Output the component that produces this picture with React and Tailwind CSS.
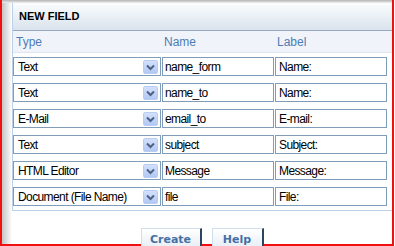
const rows = [
  { type: 'Text', name: 'name_form', label: 'Name:' },
  { type: 'Text', name: 'name_to', label: 'Name:' },
  { type: 'E-Mail', name: 'email_to', label: 'E-mail:' },
  { type: 'Text', name: 'subject', label: 'Subject:' },
  { type: 'HTML Editor', name: 'Message', label: 'Message:' },
  { type: 'Document (File Name)', name: 'file', label: 'File:' },
]

const Arrow = () => (
  <div className="absolute right-[2px] top-[2px] w-[15px] h-[14px] rounded-[2px] bg-gradient-to-b from-[#d3e0fb] to-[#b2c8f4] border border-[#b9cdf4] flex items-center justify-center">
    <svg width="9" height="7" viewBox="0 0 9 7">
      <path d="M1 1.5 L4.5 5 L8 1.5" fill="none" stroke="#4d6185" strokeWidth="2" />
    </svg>
  </div>
)

const App = () => {
  return (
    <div className="w-[395px] h-[246px] bg-white overflow-hidden">
      <div className="w-[394px] h-[246px] border-l-2 border-r-2 border-b-2 border-[#f20f0f] flex flex-col bg-white">
        <div className="h-[3px] shrink-0 bg-gradient-to-b from-[#b4b4b4] to-[#eeeeee]" />
        <div className="flex flex-1 min-h-0">
          <div className="w-[10px] shrink-0 bg-gradient-to-r from-[#c4c4c4] to-white" />
          <div className="flex-1 flex flex-col min-w-0">
            {/* panel */}
            <div className="border-l border-b border-[#b9d1ea] flex flex-col">
              <div className="h-[28px] border-b border-[#97aabf] bg-gradient-to-b from-[#fbfdfe] to-[#d9e3ec] flex items-center pl-[6px] font-['Liberation_Sans',sans-serif] text-[11px] font-bold text-black">
                NEW FIELD
              </div>
              <div className="h-[22px] bg-[#f0f4fa] border-b border-[#dfe6ee] flex items-center font-['Liberation_Sans',sans-serif] text-[12px] text-[#4d7cb4]">
                <div className="w-[148px] pl-[3px]">Type</div>
                <div className="w-[112px] pl-[2px] ml-[1px]">Name</div>
                <div className="pl-[2px] ml-[1px]">Label</div>
              </div>
              <div className="flex flex-col gap-[7px] pt-[4px] pb-[4px]">
                {rows.map((r, i) => (
                  <div key={i} className="flex h-[19px] font-['Liberation_Sans',sans-serif] text-[12px] tracking-[-0.6px] text-black leading-none">
                    <div className="relative w-[148px] h-[19px] border border-[#7f9db9] bg-white flex items-center pl-[4px]">
                      {r.type}
                      <Arrow />
                    </div>
                    <div className="w-[112px] h-[19px] ml-[1px] border border-[#7f9db9] bg-white flex items-center pl-[2px]">
                      {r.name}
                    </div>
                    <div className="w-[112px] h-[19px] ml-[1px] border border-[#7f9db9] bg-white flex items-center pl-[3px]">
                      {r.label}
                    </div>
                  </div>
                ))}
              </div>
            </div>
            {/* buttons */}
            <div className="flex justify-center gap-[10px] mt-[17px] font-['DejaVu_Sans',sans-serif] text-[11px] font-bold text-[#4470a6]">
              <button className="w-[61px] h-[22px] border-t border-l border-[#cfdded] border-r-2 border-r-[#2d4460] bg-gradient-to-b from-white to-[#e4ecf5] pt-[1px]">
                Create
              </button>
              <button className="w-[52px] h-[22px] border-t border-l border-[#cfdded] border-r-2 border-r-[#2d4460] bg-gradient-to-b from-white to-[#e4ecf5] pt-[1px]">
                Help
              </button>
            </div>
          </div>
        </div>
      </div>
    </div>
  )
}

export default App
